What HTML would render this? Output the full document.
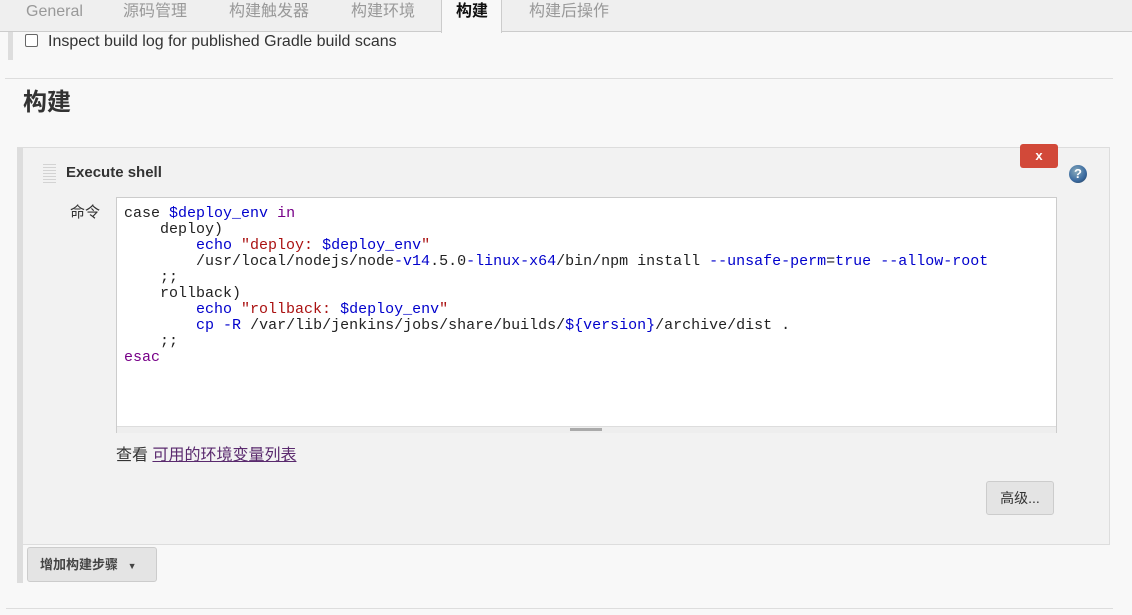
<!DOCTYPE html>
<html><head><meta charset="utf-8"><style>
body{margin:0;width:1132px;height:615px;background:#f8f8f8;font-family:"Liberation Sans","Noto Sans CJK SC",sans-serif;position:relative;overflow:hidden;color:#333}
.a{position:absolute;line-height:20px}
.tabs{left:0;top:0;width:1132px;height:32px;background:#efefef;border-bottom:1px solid #ccc;box-sizing:border-box}
.tab{position:absolute;top:2px;font-size:16px;line-height:20px;color:#999}
pre{margin:0;font-family:"Liberation Mono",monospace;font-size:15px;line-height:16px!important;color:#222}
.k{color:#708}.v{color:#00c}.s{color:#a11}
</style></head><body>
<div class="a tabs"></div>
<div class="tab" style="left:26px">General</div>
<div class="tab" style="left:123px">源码管理</div>
<div class="tab" style="left:229px">构建触发器</div>
<div class="tab" style="left:351px">构建环境</div>
<div class="a" style="left:441px;top:0;width:61px;height:33px;background:#f8f8f8;border-left:1px solid #ccc;border-right:1px solid #ccc;box-sizing:border-box"></div>
<div class="tab" style="left:456px;color:#111;font-weight:bold">构建</div>
<div class="tab" style="left:529px">构建后操作</div>
<div class="a" style="left:8px;top:32px;width:5px;height:28px;background:#ddd"></div>
<div class="a" style="left:25px;top:34px;width:13px;height:13px;border:1px solid #666;border-radius:2px;background:#fff;box-sizing:border-box"></div>
<div class="a" style="left:48px;top:32px;font-size:16px;color:#333">Inspect build log for published Gradle build scans</div>
<div class="a" style="left:5px;top:78px;width:1108px;height:1px;background:#ddd"></div>
<div class="a" style="left:23px;top:89px;font-size:24px;line-height:28px;font-weight:bold;color:#333">构建</div>
<div class="a" style="left:17px;top:147px;width:6px;height:436px;background:#ddd"></div>
<div class="a" style="left:22px;top:147px;width:1088px;height:398px;background:#f2f2f2;border:1px solid #ddd;box-sizing:border-box"></div>
<div class="a" style="left:43px;top:164px;width:13px;height:20px;background:repeating-linear-gradient(#ccc 0 1px,transparent 1px 3px),#f2f2f2;opacity:.8"></div>
<div class="a" style="left:66px;top:163px;font-size:15px;font-weight:bold;color:#333">Execute shell</div>
<div class="a" style="left:1020px;top:144px;width:38px;height:24px;background:#d24939;border-radius:3px;color:#fff;font-weight:bold;font-size:13px;text-align:center;line-height:24px">x</div>
<div class="a" style="left:1069px;top:165px;width:18px;height:18px;border-radius:50%;background:radial-gradient(circle at 40% 35%,#8ab 0,#3a6aa0 60%,#234 100%);color:#fff;font-size:13px;font-weight:bold;text-align:center;line-height:18px">?</div>
<div class="a" style="left:70px;top:203px;font-size:15px">命令</div>
<div class="a" style="left:116px;top:197px;width:941px;height:236px;background:#fff;border:1px solid #ccc;box-sizing:border-box"></div>
<div class="a" style="left:117px;top:426px;width:939px;height:6px;background:#eee;border-top:1px solid #ddd"></div>
<div class="a" style="left:570px;top:428px;width:32px;height:3px;background:#aaa"></div>
<pre class="a" style="left:124px;top:206px">case <span class="v">$deploy_env</span> <span class="k">in</span>
    deploy)
        <span class="v">echo</span> <span class="s">"deploy: <span class="v">$deploy_env</span>"</span>
        /usr/local/nodejs/node<span class="v">-v14</span>.5.0<span class="v">-linux-x64</span>/bin/npm install <span class="v">--unsafe-perm</span>=<span class="v">true</span> <span class="v">--allow-root</span>
    ;;
    rollback)
        <span class="v">echo</span> <span class="s">"rollback: <span class="v">$deploy_env</span>"</span>
        <span class="v">cp</span> <span class="v">-R</span> /var/lib/jenkins/jobs/share/builds/<span class="v">${version}</span>/archive/dist .
    ;;
<span class="k">esac</span></pre>
<div class="a" style="left:116px;top:446px;font-size:16px">查看 <span style="color:#5a2a6e;text-decoration:underline">可用的环境变量列表</span></div>
<div class="a" style="left:986px;top:481px;width:68px;height:34px;background:#e4e4e4;border:1px solid #ccc;border-radius:3px;box-sizing:border-box;font-size:14px;text-align:center;line-height:32px">高级...</div>
<div class="a" style="left:27px;top:547px;width:130px;height:35px;background:#e4e4e4;border:1px solid #ccc;border-radius:3px;box-sizing:border-box;font-size:13px;font-weight:bold;line-height:33px;padding-left:12px;color:#444">增加构建步骤 <span style="font-size:9px;margin-left:6px">▼</span></div>
<div class="a" style="left:6px;top:608px;width:1107px;height:1px;background:#ddd"></div>
</body></html>
